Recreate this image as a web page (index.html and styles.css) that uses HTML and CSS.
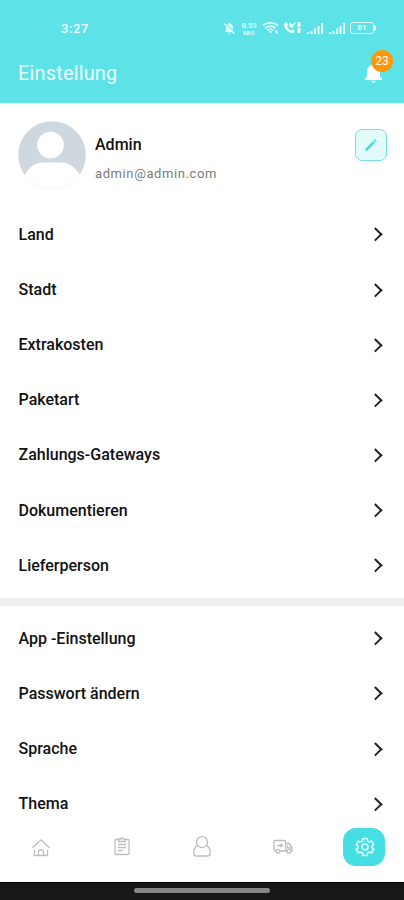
FILE: index.html
```html
<!DOCTYPE html>
<html lang="de">
<head>
<meta charset="utf-8">
<title>Einstellung</title>
<link rel="stylesheet" href="styles.css">
</head>
<body>
<div class="screen">
  <header class="header">
    <div class="status">
      <span class="time">3:27</span>
      <div class="indicators">
        <svg class="mute" width="13" height="13" viewBox="0 0 13 13"><path d="M2 9.5 3.2 8V5.2C3.2 3.4 4.3 2 5.8 1.7V.7h1.4v1C8.7 2 9.8 3.4 9.8 5.2V8L11 9.5v.6H2zM5.3 10.8h2.4c0 1.5-2.4 1.5-2.4 0z" fill="currentColor"/><path d="m2.300 1.200 10 10" stroke="#5de3e7"/><path d="m1.200 1.700 10.300 10.300" stroke="currentColor" stroke-width="1.200"/></svg>
        <span class="speed"><span>0.53</span><span>KB/S</span></span>
        <svg class="wifi" width="17" height="14" viewBox="0 0 17 14"><path d="M1 4.6c4.3-3.8 10.7-3.8 15 0M3.3 7.1c3-2.6 7.4-2.6 10.4 0M5.6 9.4c1.8-1.4 4-1.4 5.8 0" fill="none" stroke="currentColor" stroke-width="1.6"/><path d="m6.8 10.4 1.7 2 1.7-2c-1-.8-2.4-.8-3.4 0zM13.5 9.5h2.2v3h-2.2z" fill="currentColor"/></svg>
        <svg class="call" width="19" height="14" viewBox="0 0 19 14"><path d="M1.2 2.2 3.4 1l2 2.8-1.3 1.5c.8 1.9 2 3.2 3.8 4.1l1.500-1.200 2.500 2.100-1.500 2C5.500 12.500 0 6.500 1.200 2.200z" fill="currentColor"/><path d="m7 2 2.300 3 3.200-3.500M7 2v3.500h3.300" fill="none" stroke="currentColor" stroke-width="1.300"/><path d="M14.500 1h3v5h-3zM14.500 7h3v5h-3z" fill="currentColor"/></svg>
        <svg class="signal" width="18" height="13" viewBox="0 0 18 13"><path d="M1 10h2v2H1zM4.500 9h2v3h-2zM8 6.500h2V12H8zM11.500 4h2v8h-2zM15 1h2v11h-2z" fill="currentColor"/></svg>
        <svg class="signal" width="18" height="13" viewBox="0 0 18 13"><path d="M1 10h2v2H1zM4.500 9h2v3h-2zM8 6.500h2V12H8zM11.500 4h2v8h-2zM15 1h2v11h-2z" fill="currentColor"/></svg>
        <span class="battery">81</span>
      </div>
    </div>
    <div class="titlebar">
      <h1>Einstellung</h1>
      <div class="bell">
        <svg width="20" height="20" viewBox="0 0 20 20"><path d="M.9 17v-1.500l2.100-2V8.500C3 5 5 2.600 7.800 1.900V1.200C7.800-.3 11.200-.3 11.200 1.200v.7C14 2.600 16 5 16 8.500v5l2.100 2V17zM7.500 17.800h4c0 2.600-4 2.600-4 0z" fill="#fff"/></svg>
        <span class="badge">23</span>
      </div>
    </div>
  </header>

  <main class="content">
    <section class="profile">
      <svg class="avatar" width="68" height="68" viewBox="0 0 68 68"><defs><clipPath id="round"><circle cx="34" cy="34" r="33.700"/></clipPath></defs><circle cx="34" cy="34" r="33.500" fill="#fff" stroke="#f3f5f6"/><g clip-path="url(#round)"><path d="M0 0h68v54h-6C57 46 51 41.500 43 41.500H26C17 41.500 11 46 7 54H0z" fill="#cfd8df"/><circle cx="32.500" cy="24" r="13.300" fill="#fff"/></g></svg>
      <div class="who">
        <div class="name">Admin</div>
        <div class="email">admin@admin.com</div>
      </div>
      <div class="edit"><svg width="14" height="14" viewBox="0 0 14 14"><path d="m1.300 10.800 7.800-7.800 1.900 1.900-7.800 7.800H1.300zM9.700 2.300l.8-.8c.3-.3.600-.3.900 0l1.100 1.100c.3.300.3.600 0 .9l-.8.800z" fill="#4fd8dc"/></svg></div>
    </section>

    <ul class="menu">
      <li><span>Land</span><i class="chevron"></i></li>
      <li><span>Stadt</span><i class="chevron"></i></li>
      <li><span>Extrakosten</span><i class="chevron"></i></li>
      <li><span>Paketart</span><i class="chevron"></i></li>
      <li><span>Zahlungs-Gateways</span><i class="chevron"></i></li>
      <li><span>Dokumentieren</span><i class="chevron"></i></li>
      <li><span>Lieferperson</span><i class="chevron"></i></li>
    </ul>
    <div class="divider"></div>
    <ul class="menu second">
      <li><span>App -Einstellung</span><i class="chevron"></i></li>
      <li><span>Passwort ändern</span><i class="chevron"></i></li>
      <li><span>Sprache</span><i class="chevron"></i></li>
      <li><span>Thema</span><i class="chevron"></i></li>
    </ul>
  </main>

  <nav class="nav">
    <div class="tab"><svg width="20" height="20" viewBox="0 0 20 20"><path d="m1.500 10.800 8.500-8 8.500 8M3.500 12.500v6h13v-6M7.500 18.500v-4c0-2.300 5-2.300 5 0v4"/></svg></div>
    <div class="tab"><svg width="20" height="20" viewBox="0 0 20 20"><path d="M7 2.500H4c-.6 0-1 .4-1 1v13c0 .6.400 1 1 1h12c.6 0 1-.4 1-1v-13c0-.6-.4-1-1-1h-3M7 2h1.700c0-1.600 2.600-1.600 2.600 0H13v2.500H7zM6 7.500h8M6 10.500h8M6 13.500h5"/></svg></div>
    <div class="tab"><svg width="20" height="22" viewBox="0 0 20 22"><circle cx="10" cy="6.200" r="5.500"/><path d="M5.600 9.700C2.800 11 1.700 13.500 1.700 17c0 2.200 1 3 3 3h10.600c2 0 3-.8 3-3 0-3.500-1.100-6-3.900-7.300"/></svg></div>
    <div class="tab"><svg width="20" height="18" viewBox="0 0 20 18"><path d="M3.200 13H2c-.6 0-1-.4-1-1V3.500c0-.6.400-1 1-1h9.500c.6 0 1 .4 1 1V13H7M12.500 5.500H16l3 4V13h-1.200M14 13h-1.500M14.500 7.500v2.300H19M4 7.500h5M7.500 5.700l2 1.800-2 1.800"/><circle cx="5" cy="13.300" r="1.900"/><circle cx="15.900" cy="13.300" r="1.900"/></svg></div>
    <div class="tab active"><svg width="20" height="20" viewBox="0 0 20 20"><path d="M8 1.500h4l.6 2.400 1.700 1 2.400-.7 2 3.400L17 9.200v1.600l1.700 1.600-2 3.400-2.400-.7-1.700 1-.6 2.400H8l-.6-2.400-1.700-1-2.400.7-2-3.400L3 10.800V9.200L1.300 7.600l2-3.400 2.400.7 1.700-1z"/><circle cx="10" cy="10" r="3"/></svg></div>
  </nav>
  <footer class="system"><div class="handle"></div></footer>
</div>
</body>
</html>
```

FILE: styles.css
```css
* { box-sizing: border-box; }
body { margin: 0; font-family: Roboto, "Liberation Sans", sans-serif; background: #fff; color: #111; }
.screen { width: 404px; height: 900px; display: flex; flex-direction: column; overflow: hidden; }
.header { flex: 0 0 103px; background: #5de3e7; color: #e9fdfd; }
.status { height: 44px; display: flex; align-items: center; justify-content: space-between; padding: 12px 30px 0 61px; }
.time { font-size: 13px; font-weight: 500; letter-spacing: 0.6px; }
.indicators { display: flex; align-items: center; gap: 4px; }
.speed { display: flex; flex-direction: column; align-items: center; width: 18px; font-size: 7.500px; line-height: 9px; font-weight: 700; }
.speed span + span { font-size: 5px; line-height: 6px; }
.battery { width: 24px; height: 12px; border: 1px solid currentColor; border-radius: 3px; font-size: 8px; line-height: 10px; font-weight: 700; text-align: center; position: relative; }
.battery::after { content: ""; position: absolute; right: -3px; top: 2px; width: 2px; height: 6px; background: currentColor; border-radius: 0 2px 2px 0; }
.titlebar { height: 59px; display: flex; align-items: center; justify-content: space-between; padding: 0 20px 2px 18px; }
h1 { margin: 0; font-size: 20px; line-height: 24px; font-weight: 400; letter-spacing: 0.15px; }
.bell { position: relative; width: 20px; height: 20px; }
.bell svg { display: block; }
.badge { position: absolute; left: 7px; top: -13px; width: 22px; height: 22px; border-radius: 50%; background: #ff9708; color: #fff; font-size: 12px; line-height: 22px; text-align: center; }
.content { flex: 1 1 0; min-height: 0; overflow: hidden; }
.profile { height: 103.500px; display: flex; padding: 18px 17px 0 18px; }
.avatar { flex: none; }
.who { flex: 1; padding: 14px 0 0 9px; }
.name { font-size: 16px; line-height: 20px; font-weight: 500; }
.email { margin-top: 9px; font-size: 13px; line-height: 20px; letter-spacing: 0.6px; color: #7c7c7c; }
.edit { width: 32px; height: 32px; margin-top: 8px; border: 1.500px solid #73dfe2; border-radius: 7px; background: #e2fafa; display: flex; align-items: center; justify-content: center; }
.menu { list-style: none; margin: 0; padding: 0 23px 5.400px 18.500px; }
.menu.second { padding-top: 4.500px; }
.menu li { height: 55.150px; padding-top: 0.600px; display: flex; align-items: center; justify-content: space-between; font-size: 16px; font-weight: 500; }
.chevron { width: 10px; height: 10px; border: solid #222; border-width: 2px 2px 0 0; transform: translate(-0.500px, 0.300px) rotate(45deg); }
.divider { height: 8px; background: #efefef; }
.nav { flex: 0 0 67px; display: flex; align-items: center; background: #fff; padding-bottom: 4px; }
.tab { flex: 1; display: flex; align-items: center; justify-content: center; padding-left: 1px; }
.tab svg { fill: none; stroke: #bdbdbd; stroke-width: 1.300; }
.tab.active { flex: 0 0 42px; height: 38px; margin: 0 19px 0 20px; border-radius: 13px; background: #45dfe3; }
.tab.active svg { stroke: #d9fbfb; stroke-width: 1.700; }
.system { flex: 0 0 18px; background: #171717; border-top: 1px solid #000; display: flex; justify-content: center; padding-top: 5px; }
.handle { width: 136px; height: 5px; border-radius: 3px; background: #858585; }
```
